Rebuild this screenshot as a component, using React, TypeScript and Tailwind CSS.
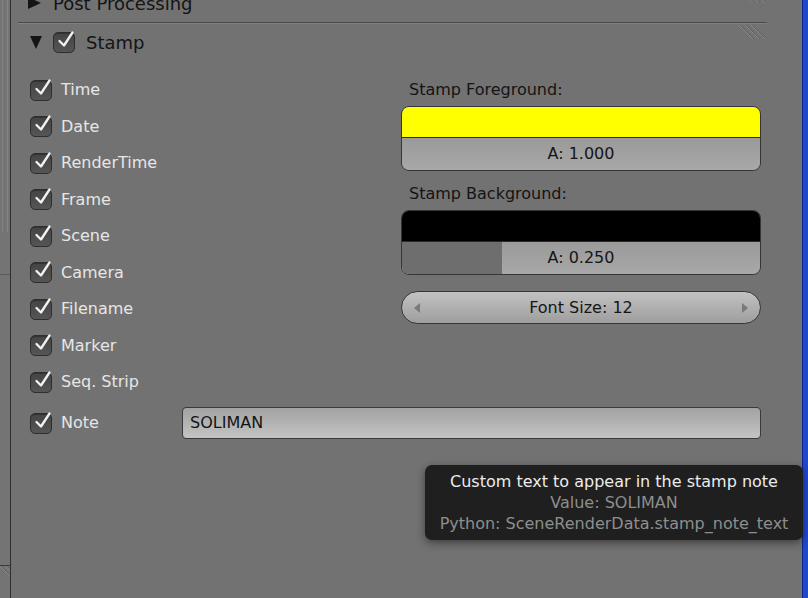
// Blender render properties — Stamp panel with tooltip over the Note field
const FONT = { fontFamily: '"DejaVu Sans", "Liberation Sans", sans-serif' };

const STAMPS = ["Time", "Date", "RenderTime", "Frame", "Scene", "Camera", "Filename", "Marker", "Seq. Strip"];

function Check() {
  return (
    <div className="relative h-[21px] w-[22px] shrink-0 rounded-[5px] border border-[#2e2e2e] bg-gradient-to-b from-[#444] to-[#555] shadow-[inset_0_1px_0_rgba(0,0,0,.25)]">
      <svg className="absolute -top-[4px] left-[2px]" width="20" height="22" viewBox="0 0 20 22">
        <path d="M3.5 12 L8 16.5 L16.5 3.5" fill="none" stroke="#f2f2f2" strokeWidth="2.3" strokeLinecap="round" strokeLinejoin="round" />
      </svg>
    </div>
  );
}

function Hatch() {
  return (
    <svg width="26" height="26" viewBox="0 0 26 26">
      {[0, 6, 12].map((o) => (
        <g key={o}>
          <line x1={o} y1="0" x2={o + 14} y2="14" stroke="#8a8a8a" strokeWidth="1" />
          <line x1={o + 1} y1="0" x2={o + 15} y2="14" stroke="#5e5e5e" strokeWidth="1" />
        </g>
      ))}
    </svg>
  );
}

function Triangle({ down }: { down?: boolean }) {
  return down ? (
    <svg width="12" height="13" viewBox="0 0 12 13">
      <polygon points="0,0 12,0 6,13" fill="#141414" />
    </svg>
  ) : (
    <svg width="13" height="12" viewBox="0 0 13 12">
      <polygon points="0,0 13,6 0,12" fill="#141414" />
    </svg>
  );
}

function ColorField({ color, alpha, fill }: { color: string; alpha: string; fill?: boolean }) {
  return (
    <div className="overflow-hidden rounded-[8px] border border-[#363636]">
      <div className="h-[31px] border-b border-[#2a2a2a]" style={{ background: color }} />
      <div className="relative flex h-[32px] items-center justify-center bg-gradient-to-b from-[#9a9a9a] to-[#a8a8a8]">
        {fill && <div className="absolute inset-y-0 left-0 w-[100px] bg-[#6e6e6e]" />}
        <span className="relative text-[16px] text-[#161616]">{alpha}</span>
      </div>
    </div>
  );
}

export default function App() {
  return (
    <div className="flex h-[598px] w-[808px] overflow-hidden bg-[#727272]" style={FONT}>
      {/* left region edge */}
      <div className="flex w-[11px] shrink-0 flex-col border-r border-[#2f2f2f] bg-[#747474]">
        <div className="ml-[2px] h-[232px] w-[6px] border-x border-[#858585]" />
        <div className="mt-[42px] border-t border-[#5a5a5a]" />
        <div className="flex-1" />
        <div className="h-[33px] overflow-hidden border-t border-[#3a3a3a]">
          <Hatch />
        </div>
      </div>

      {/* main panel */}
      <div className="relative flex min-w-0 flex-1 flex-col">
        <div className="flex h-[22px] items-center pl-[17px] pr-[35px]">
          <div className="-mt-[16px] flex items-center gap-[12px]">
            <Triangle />
            <span className="text-[18px] text-[#141414]">Post Processing</span>
          </div>
          <div className="ml-auto -mt-[18px] mr-[2px]">
            <Hatch />
          </div>
        </div>
        <div className="ml-[7px] mr-[35px] border-t border-[#4a4a4a] shadow-[0_1px_0_#808080]" />

        <div className="flex h-[38px] items-center pl-[19px] pr-[35px]">
          <Triangle down />
          <div className="ml-[11px]">
            <Check />
          </div>
          <span className="ml-[11px] text-[18px] text-[#141414]">Stamp</span>
          <div className="ml-auto -mt-[8px] mr-[2px]">
            <Hatch />
          </div>
        </div>

        <div className="flex pl-[19px] pr-[41px]">
          <div className="flex w-[371px] flex-col pt-[10.75px]">
            {STAMPS.map((s) => (
              <div key={s} className="flex h-[36.5px] items-center gap-[9px]">
                <Check />
                <span className="text-[16px] text-[#e6e6e6]">{s}</span>
              </div>
            ))}
          </div>
          <div className="flex flex-1 flex-col pt-[19px]">
            <div className="pl-[8px] text-[16px] leading-[20px] text-[#141414]">Stamp Foreground:</div>
            <div className="mt-[6px]">
              <ColorField color="#ffff00" alpha="A: 1.000" />
            </div>
            <div className="mt-[13px] pl-[8px] text-[16px] leading-[20px] text-[#141414]">Stamp Background:</div>
            <div className="mt-[6px]">
              <ColorField color="#000000" alpha="A: 0.250" fill />
            </div>
            <div className="mt-[16px] flex h-[33px] items-center justify-between rounded-full border border-[#363636] bg-gradient-to-b from-[#c2c2c2] to-[#9e9e9e] px-[12px]">
              <svg width="6" height="10" viewBox="0 0 6 10">
                <polygon points="6,0 0,5 6,10" fill="#7a7a7a" />
              </svg>
              <span className="text-[16px] text-[#161616]">Font Size: 12</span>
              <svg width="6" height="10" viewBox="0 0 6 10">
                <polygon points="0,0 6,5 0,10" fill="#7a7a7a" />
              </svg>
            </div>
          </div>
        </div>

        <div className="mt-[5px] flex h-[36px] items-center pl-[19px] pr-[41px]">
          <Check />
          <span className="ml-[9px] w-[121px] text-[16px] text-[#e6e6e6]">Note</span>
          <div className="flex h-[32px] flex-1 items-center rounded-[4px] border border-[#3a3a3a] bg-gradient-to-b from-[#a2a2a2] to-[#c4c4c4] px-[7px] text-[16px] text-[#141414]">
            SOLIMAN
          </div>
        </div>

        {/* tooltip */}
        <div className="absolute left-[414px] top-[465px] z-10 flex w-[378px] flex-col items-center rounded-[7px] bg-[#1f1f1f] py-[6px] leading-[21px] shadow-[0_3px_8px_rgba(0,0,0,.45)]">
          <span className="text-[16px] text-[#ececec]">Custom text to appear in the stamp note</span>
          <span className="text-[16px] text-[#8e8e8e]">Value: SOLIMAN</span>
          <span className="text-[16px] text-[#8e8e8e]">Python: SceneRenderData.stamp_note_text</span>
        </div>
      </div>

      {/* window edge */}
      <div className="w-[6px] shrink-0 border-l border-[#0e2a8a] bg-[#1f47d0]" />
    </div>
  );
}
